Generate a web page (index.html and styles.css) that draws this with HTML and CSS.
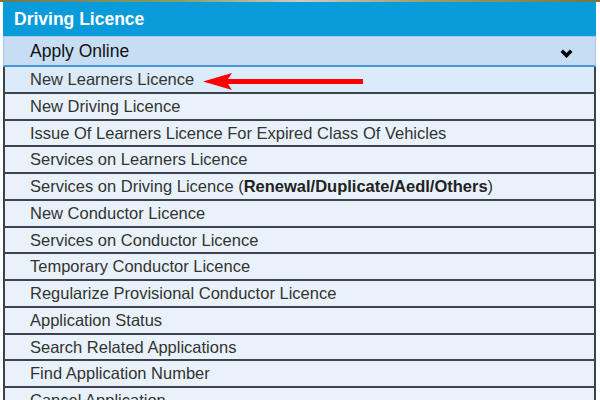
FILE: index.html
```html
<!DOCTYPE html>
<html lang="en">
<head>
    <meta charset="UTF-8">
    <meta name="viewport" content="width=device-width, initial-scale=1.0">
    <title>Driving Licence</title>
    <link rel="stylesheet" href="styles.css">
</head>
<body>
    <div class="photo-strip"></div>
    <div class="panel">
        <div class="panel-head">Driving Licence</div>
        <div class="menu-toggle">
            <span>Apply Online</span>
            <svg class="chevron" width="13" height="9" viewBox="0 0 13 9">
                <polyline points="1.8,1.8 6.5,6.5 11.2,1.8" fill="none" stroke="#000" stroke-width="3.6"/>
            </svg>
        </div>
        <ul class="menu-list">
            <li class="active">
                New Learners Licence
                <!-- red pointer arrow -->
                <svg class="pointer" width="162" height="20" viewBox="0 0 162 20">
                    <polygon points="0,9.5 29,1 25,7 160,7 160,12 25,12 29,18" fill="#f00"/>
                </svg>
            </li>
            <li>New Driving Licence</li>
            <li>Issue Of Learners Licence For Expired Class Of Vehicles</li>
            <li>Services on Learners Licence</li>
            <li>Services on Driving Licence (<b>Renewal/Duplicate/Aedl/Others</b>)</li>
            <li>New Conductor Licence</li>
            <li>Services on Conductor Licence</li>
            <li>Temporary Conductor Licence</li>
            <li>Regularize Provisional Conductor Licence</li>
            <li>Application Status</li>
            <li>Search Related Applications</li>
            <li>Find Application Number</li>
            <li>Cancel Application</li>
        </ul>
    </div>
</body>
</html>
```

FILE: styles.css
```css
body {
    margin: 0;
    font-family: "Liberation Sans", Arial, sans-serif;
    background-color: #fff;
    height: 400px;
    overflow: hidden;
}
.photo-strip {
    height: 2px;
    background: linear-gradient(to right, #6f7a4e 0%, #8c9a6a 30%, #c9cfc4 50%, #9aa070 70%, #6d7a45 100%);
}
.panel {
    margin: 0 4px 0 3px;
}
.panel-head {
    height: 34px;
    line-height: 34px;
    padding-left: 11px;
    background-color: #0a9bdb;
    color: #fff;
    font-weight: bold;
    font-size: 17.5px;
}
.menu-toggle {
    display: flex;
    align-items: center;
    justify-content: space-between;
    height: 28px;
    padding: 0 22px 0 26px;
    background-color: #c7ddf4;
    border: 1px solid #a6c7e9;
    border-bottom: 2px solid #4f97d3;
    color: #111;
    font-size: 17.5px;
}
.chevron {
    margin-top: 4px;
}
.menu-list {
    list-style: none;
    margin: 0;
    padding: 0;
    border-left: 2px solid #3d434a;
    border-right: 2px solid #3d434a;
}
.menu-list li {
    position: relative;
    height: 24.75px;
    line-height: 24.75px;
    padding-left: 25px;
    background-color: #e9f2fa;
    border-bottom: 2px solid #3d434a;
    color: #333;
    font-size: 16.5px;
    white-space: nowrap;
}
.menu-list li.active {
    background-color: #dcebf9;
}
.menu-list b {
    color: #222;
}
.pointer {
    position: absolute;
    left: 198px;
    top: 5px;
}
```
